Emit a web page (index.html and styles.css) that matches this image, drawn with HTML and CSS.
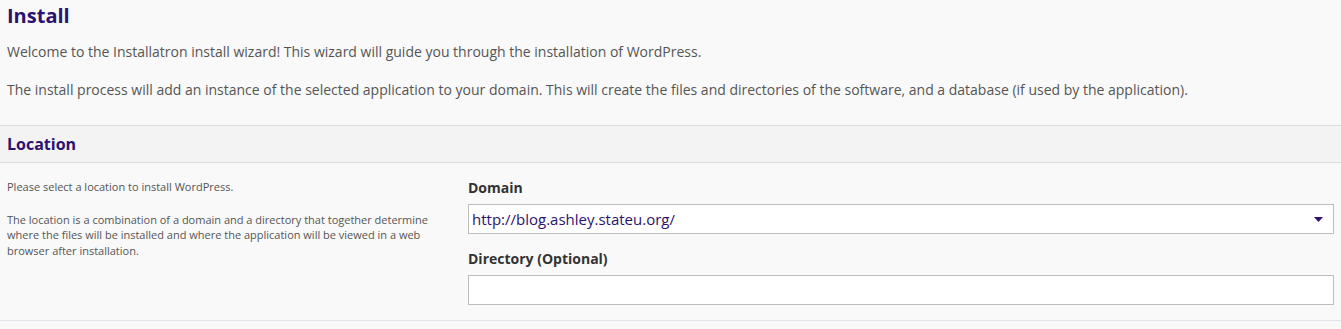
FILE: index.html
```html
<!DOCTYPE html>
<html lang="en">

<head>
    <meta charset="UTF-8" />
    <meta name="viewport" content="width=device-width, initial-scale=1.0" />
    <title>Install WordPress</title>
    <link rel="stylesheet" href="styles.css">
</head>

<body>
    <div class="intro">
        <h1>Install</h1>
        <p>Welcome to the Installatron install wizard! This wizard will guide you through the installation of WordPress.</p>
        <p>The install process will add an instance of the selected application to your domain. This will create the files and directories of the software, and a database (if used by the application).</p>
    </div>

    <div class="section">
        <div class="section-header">
            <h2>Location</h2>
        </div>
        <div class="section-body">
            <div class="help">
                <p>Please select a location to install WordPress.</p>
                <p>The location is a combination of a domain and a directory that together determine where the files will be installed and where the application will be viewed in a web browser after installation.</p>
            </div>
            <div class="fields">
                <label class="field-label">Domain</label>
                <div class="select-box">
                    <span>http://blog.ashley.stateu.org/</span>
                    <svg class="caret" width="9" height="5" viewBox="0 0 9 5">
                        <path d="M0 0 H9 L4.5 5 Z" fill="#2c1270" />
                    </svg>
                </div>
                <label class="field-label">Directory (Optional)</label>
                <div class="text-box"></div>
            </div>
        </div>
    </div>
</body>

</html>
```

FILE: styles.css
```css
body {
    font-family: "Open Sans", Arial, sans-serif;
    margin: 0;
    background-color: #f9f9f9;
    color: #555;
}

.intro {
    padding: 4px 7px 0;
}

h1 {
    font-size: 20px;
    line-height: 24px;
    font-weight: bold;
    color: #2c1270;
    margin: 0 0 14px;
}

.intro p {
    font-size: 14px;
    line-height: 20px;
    margin: 0 0 18px;
}

.intro p:last-child {
    margin-bottom: 25px;
}

.section-header {
    background-color: #f3f3f3;
    border-top: 1px solid #dedede;
    border-bottom: 1px solid #dedede;
    padding: 0 7px;
}

h2 {
    font-size: 16px;
    line-height: 36px;
    font-weight: bold;
    color: #2c1270;
    margin: 0;
}

.section-body {
    display: grid;
    grid-template-columns: 454px 1fr;
    gap: 7px;
    padding: 15px 7px 15px;
    border-bottom: 1px solid #e2e2ea;
}

.help p {
    font-size: 11px;
    line-height: 15.5px;
    margin: 1px 0 17px;
    max-width: 430px;
}

.fields {
    display: flex;
    flex-direction: column;
}

.field-label {
    font-size: 14px;
    line-height: 20px;
    font-weight: bold;
    color: #333;
    margin-bottom: 6px;
}

.select-box,
.text-box {
    height: 30px;
    box-sizing: border-box;
    background-color: white;
    border: 1px solid #bdbdbd;
    margin-bottom: 15px;
}

.select-box {
    display: flex;
    align-items: center;
    justify-content: space-between;
    padding: 0 10px 0 3px;
    font-size: 15px;
    color: #2c1270;
}

.text-box {
    margin-bottom: 0;
}

.caret {
    display: block;
}
```
